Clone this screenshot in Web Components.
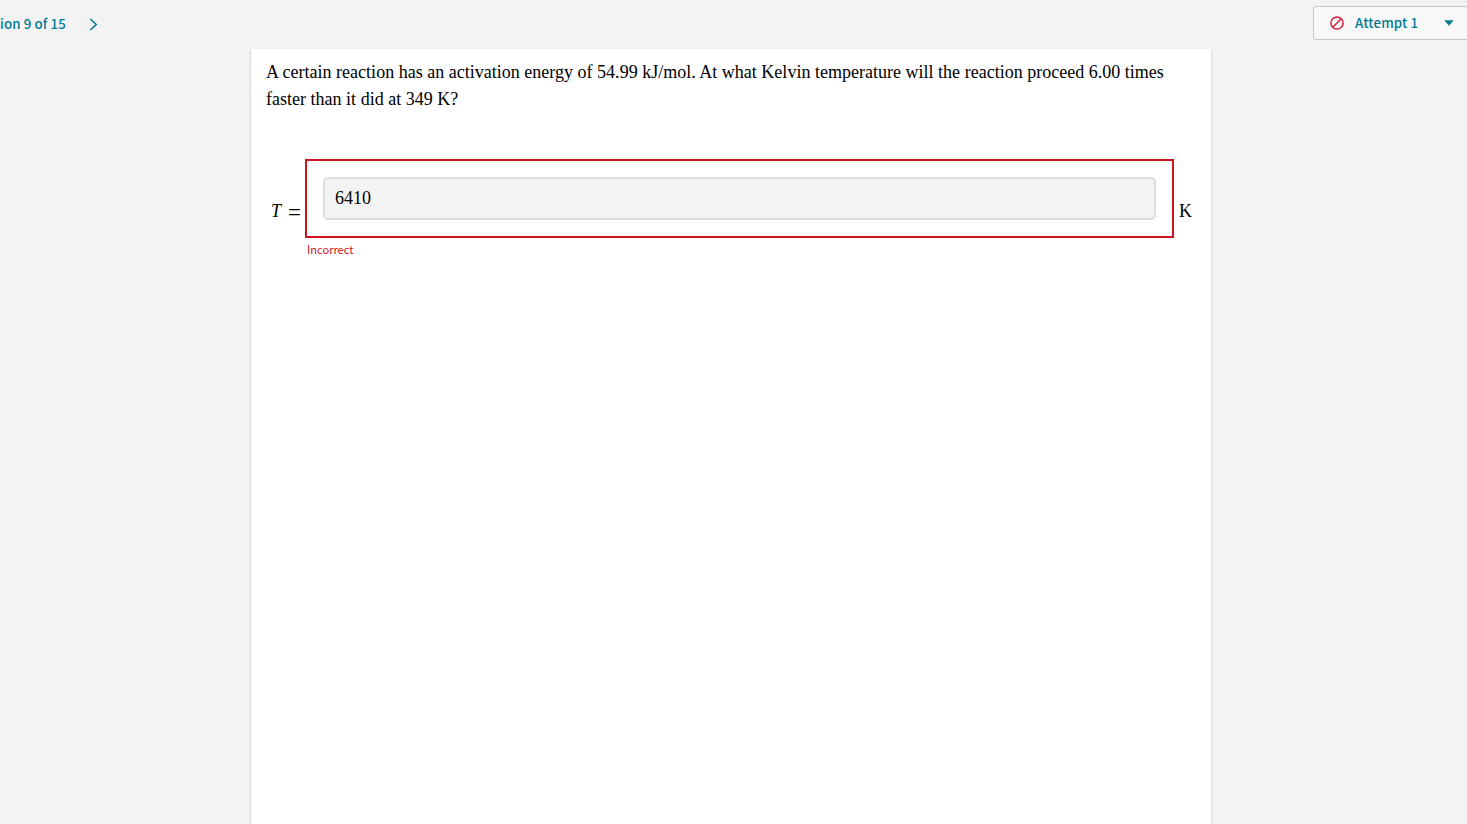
<!DOCTYPE html>
<html lang="en">
<head>
<meta charset="utf-8">
<title>Question 9 of 15</title>
<style>
    html, body {
        margin: 0;
        height: 100%;
        overflow: hidden;
        background: #f3f3f3;
    }
    body {
        --teal: #007b92;
        --red: #ce1220;
        --ui: "Noto Sans CJK SC", "Open Sans", sans-serif;
        font: 18px/27px "Liberation Serif", "Times New Roman", serif;
        color: #000;
    }
</style>
</head>
<body>
<quiz-page>
    <question-nav slot="bar">ion 9 of 15</question-nav>
    <attempt-picker slot="bar">Attempt 1</attempt-picker>
    <question-card>
        <span slot="prompt">A certain reaction has an activation energy of 54.99 kJ/mol. At what Kelvin temperature will the reaction proceed 6.00 times faster than it did at 349 K?</span>
        <answer-field label="T" unit="K" value="6410">Incorrect</answer-field>
    </question-card>
</quiz-page>
<script>
const define = (name, html) => {
    window.customElements.define(name, class extends HTMLElement {
        constructor () {
            super()
            this.root = this.attachShadow({ mode: 'open' })
        }
        connectedCallback () {
            this.root.innerHTML = html(this)
        }
    })
}

define('quiz-page', () => `<style>
    :host {
        display: flex;
        flex-direction: column;
        height: 100vh;
    }
    header {
        display: flex;
        justify-content: space-between;
        align-items: flex-start;
        height: 49px;
        flex: none;
    }
    main {
        flex: 1;
        display: flex;
        padding-left: 251px;
    }
    </style>
    <header><slot name="bar"></slot></header>
    <main><slot></slot></main>`)

define('question-nav', () => `<style>
    :host {
        display: flex;
        align-items: center;
        height: 48px;
        font: 500 13.3px/20px var(--ui);
        letter-spacing: .1px;
        color: var(--teal);
        white-space: nowrap;
    }
    span {
        width: 89px;
    }
    svg {
        display: block;
        margin-top: 1px;
    }
    </style>
    <span><slot></slot></span>
    <svg width="10" height="13" viewBox="0 0 10 13" fill="none" stroke="currentColor" stroke-width="1.6">
        <path d="M1.4 1 L7.2 6.5 L1.4 12"/>
    </svg>`)

define('attempt-picker', () => `<style>
    :host {
        display: flex;
        align-items: center;
        box-sizing: border-box;
        width: 155px;
        height: 34px;
        margin: 6px -1px 0 0;
        padding: 0 13px 0 16px;
        border: 1px solid #c6c6c6;
        border-radius: 3px;
        background: #f8f8f8;
        font: 500 13.3px/20px var(--ui);
        letter-spacing: .14px;
        color: var(--teal);
        white-space: nowrap;
    }
    span {
        flex: 1;
        margin-left: 11px;
    }
    svg {
        display: block;
        flex: none;
    }
    .wrong {
        color: #d6203a;
    }
    </style>
    <svg class="wrong" width="14" height="14" viewBox="0 0 14 14" fill="none" stroke="currentColor" stroke-width="1.5">
        <circle cx="7" cy="7" r="6.1"/>
        <path d="M2.7 11.3 L11.3 2.7"/>
    </svg>
    <span><slot></slot></span>
    <svg width="10" height="6" viewBox="0 0 10 6" fill="currentColor">
        <path d="M0.3 0.3 H9.7 L5 5.8 Z"/>
    </svg>`)

define('question-card', () => `<style>
    :host {
        display: block;
        box-sizing: border-box;
        width: 960px;
        padding: 10px 16px 0 15px;
        background: #fff;
        box-shadow: 0 1px 2px rgba(0, 0, 0, .3);
    }
    .prompt {
        height: 100px;
        letter-spacing: .012px;
    }
    </style>
    <div class="prompt"><slot name="prompt"></slot></div>
    <slot></slot>`)

define('answer-field', el => `<style>
    :host {
        display: grid;
        grid-template-columns: 39px 869px auto;
    }
    .label, .unit {
        align-self: center;
        padding-top: 26px;
        margin-left: 5px;
        white-space: nowrap;
    }
    .label {
        display: flex;
        align-items: baseline;
        gap: 7px;
    }
    .equals {
        font-size: 23px;
        line-height: 20px;
        position: relative;
        top: 3px;
    }
    .frame {
        box-sizing: border-box;
        height: 79px;
        padding: 16px;
        border: 2px solid var(--red);
    }
    .input {
        box-sizing: border-box;
        height: 43px;
        padding: 6px 10px;
        border: 2px solid #dcdcdc;
        border-radius: 5px;
        background: #f3f3f3;
    }
    .message {
        grid-column: 2;
        margin: 2px 0 0 2px;
        font: 11.1px/18px var(--ui);
        color: var(--red);
    }
    </style>
    <div class="label"><i>${el.getAttribute('label')}</i><span class="equals">=</span></div>
    <div class="frame"><div class="input">${el.getAttribute('value')}</div></div>
    <div class="unit">${el.getAttribute('unit')}</div>
    <div class="message"><slot></slot></div>`)
</script>
</body>
</html>
